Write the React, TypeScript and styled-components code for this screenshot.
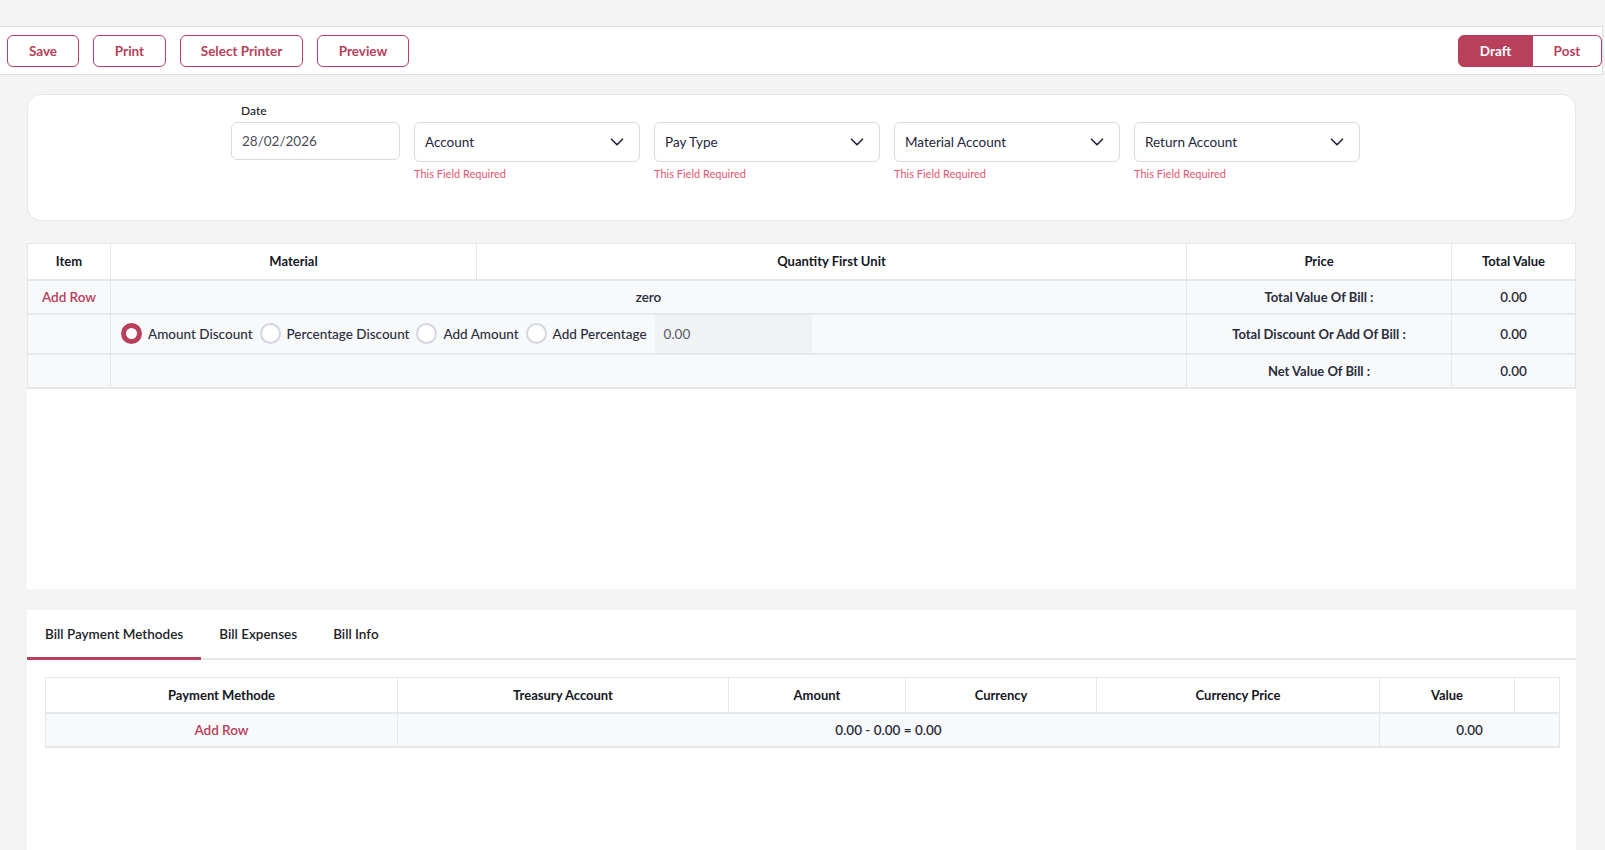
import React from "react";
import styled, { createGlobalStyle, css } from "styled-components";
import { ChevronDown } from "lucide-react";

const RED = "#b8405a";
const ERROR_RED = "#e5566f";
const BORDER = "#e5e7eb";
const TEXT = "#1f2230";

const GlobalStyle = createGlobalStyle`
  * { box-sizing: border-box; }
  body {
    margin: 0;
    background: #f4f4f5;
    font-family: Lato, "Noto Sans", sans-serif;
    color: ${TEXT};
  }
`;

const Page = styled.div`
  height: 850px;
  padding-top: 26px;
  display: flex;
  flex-direction: column;
  overflow: hidden;
`;

const Toolbar = styled.div`
  height: 49px;
  margin-right: 2px;
  background: #fff;
  border: 1px solid #dcdbe8;
  border-left: none;
  display: flex;
  align-items: center;
  justify-content: space-between;
  padding: 0 0 0 7px;
`;

const ButtonGroup = styled.div`
  display: flex;
  gap: 14px;
`;

const OutlineButton = styled.button<{ $w: number }>`
  height: 32px;
  width: ${(p) => p.$w}px;
  border: 1px solid ${RED};
  border-radius: 6px;
  background: #fff;
  color: ${RED};
  font-family: inherit;
  font-size: 13.5px;
  font-weight: 700;
  cursor: pointer;
`;

const Segmented = styled.div`
  display: flex;
`;

const SegButton = styled.button<{ $active?: boolean; $w: number }>`
  height: 32px;
  width: ${(p) => p.$w}px;
  font-family: inherit;
  font-size: 13.5px;
  font-weight: 700;
  border: 1px solid ${RED};
  cursor: pointer;
  ${(p) =>
    p.$active
      ? css`
          background: ${RED};
          color: #fff;
          border-radius: 6px 0 0 6px;
        `
      : css`
          background: #fff;
          color: ${RED};
          border-left: none;
          border-radius: 0 6px 6px 0;
        `}
`;

const Content = styled.div`
  flex: 1;
  display: flex;
  flex-direction: column;
  padding: 19px 29px 0 27px;
  min-height: 0;
`;

const FilterCard = styled.div`
  height: 127px;
  background: #fff;
  border: 1px solid ${BORDER};
  border-radius: 14px;
  display: flex;
  justify-content: center;
  gap: 14px;
  padding: 8px 12px 0 0;
`;

const Field = styled.div<{ $w: number }>`
  width: ${(p) => p.$w}px;
  display: flex;
  flex-direction: column;
`;

const Label = styled.label`
  font-size: 12px;
  font-weight: 500;
  color: #222;
  height: 17px;
  padding-left: 10px;
`;

const DateInput = styled.div`
  height: 38px;
  border: 1px solid #d8dae2;
  border-radius: 6px;
  display: flex;
  align-items: center;
  padding: 0 10px;
  font-size: 13.5px;
  color: #4a4d57;
  margin-top: 2px;
`;

const SelectBox = styled.div`
  height: 40px;
  margin-top: 19px;
  border: 1px solid #d8dae2;
  border-radius: 6px;
  display: flex;
  align-items: center;
  justify-content: space-between;
  padding: 0 11px 0 10px;
  font-size: 13.5px;
  color: #23263a;
`;

const ErrorText = styled.span`
  margin-top: 5px;
  font-size: 11px;
  color: ${ERROR_RED};
`;

const TableCard = styled.div`
  margin-top: 22px;
  height: 346px;
  background: #fff;
`;

const Table = styled.table`
  width: 100%;
  border-collapse: collapse;
  table-layout: fixed;
`;

const Th = styled.th<{ $h?: number }>`
  height: ${(p) => p.$h ?? 36}px;
  background: #fff;
  border: 1px solid ${BORDER};
  border-bottom: 2px solid ${BORDER};
  font-size: 13px;
  font-weight: 700;
  color: #15171f;
  text-align: center;
  padding: 0;
`;

const Td = styled.td<{ $h?: number; $bold?: boolean; $link?: boolean }>`
  height: ${(p) => p.$h ?? 34}px;
  background: #f8f9fb;
  border: 1px solid ${BORDER};
  border-bottom: 2px solid ${BORDER};
  font-size: ${(p) => (p.$bold ? 13 : 13.5)}px;
  font-weight: ${(p) => (p.$bold ? 700 : 600)};
  color: ${(p) => (p.$link ? RED : "#2a2d3a")};
  text-align: center;
  padding: 0;
`;

const RadioCell = styled.td`
  height: 40px;
  background: #f8f9fb;
  border: 1px solid ${BORDER};
  border-bottom: 2px solid ${BORDER};
  padding: 0;
`;

const RadioRow = styled.div`
  display: flex;
  align-items: center;
  height: 38px;
  padding-left: 10px;
  gap: 7px;
`;

const RadioOption = styled.label`
  display: flex;
  align-items: center;
  gap: 6px;
  font-size: 13.5px;
  font-weight: 500;
  color: #2a2d3a;
`;

const RadioDot = styled.span<{ $checked?: boolean }>`
  width: 21px;
  height: 21px;
  border-radius: 50%;
  background: #fff;
  border: ${(p) => (p.$checked ? `5px solid ${RED}` : "2px solid #d4d6dd")};
`;

const AmountInput = styled.div`
  width: 157px;
  height: 38px;
  margin-left: 1px;
  background: #f1f2f4;
  display: flex;
  align-items: center;
  padding-left: 9px;
  font-size: 13.5px;
  color: #555a66;
`;

const TabsCard = styled.div`
  margin-top: 21px;
  flex: 1;
  background: #fff;
`;

const TabList = styled.div`
  display: flex;
  border-bottom: 2px solid ${BORDER};
  height: 50px;
`;

const Tab = styled.div<{ $active?: boolean }>`
  padding: 0 18px;
  display: flex;
  align-items: center;
  font-size: 13.5px;
  font-weight: 600;
  color: #1c1e28;
  margin-bottom: -2px;
  border-bottom: 3px solid ${(p) => (p.$active ? RED : "transparent")};
`;

const PaymentWrap = styled.div`
  padding: 17px 17px 0 18px;
`;

const materialCols = [83, 366, 710, 265, 124];
const paymentCols = [352, 331, 177, 191, 283, 135, 45];

const toolbarButtons: [string, number][] = [
  ["Save", 72],
  ["Print", 73],
  ["Select Printer", 123],
  ["Preview", 92],
];

const selects = ["Account", "Pay Type", "Material Account", "Return Account"];
const radios = ["Amount Discount", "Percentage Discount", "Add Amount", "Add Percentage"];
const paymentHeads = ["Payment Methode", "Treasury Account", "Amount", "Currency", "Currency Price", "Value", ""];

export default function App() {
  return (
    <>
      <GlobalStyle />
      <Page>
        <Toolbar>
          <ButtonGroup>
            {toolbarButtons.map(([label, w]) => (
              <OutlineButton key={label} $w={w}>
                {label}
              </OutlineButton>
            ))}
          </ButtonGroup>
          <Segmented>
            <SegButton $active $w={75}>
              Draft
            </SegButton>
            <SegButton $w={69}>Post</SegButton>
          </Segmented>
        </Toolbar>

        <Content>
          <FilterCard>
            <Field $w={169}>
              <Label>Date</Label>
              <DateInput>28/02/2026</DateInput>
            </Field>
            {selects.map((s) => (
              <Field key={s} $w={226}>
                <SelectBox>
                  {s}
                  <ChevronDown size={22} strokeWidth={1.8} color="#23263a" />
                </SelectBox>
                <ErrorText>This Field Required</ErrorText>
              </Field>
            ))}
          </FilterCard>

          <TableCard>
            <Table>
              <colgroup>
                {materialCols.map((w, i) => (
                  <col key={i} style={{ width: w }} />
                ))}
              </colgroup>
              <thead>
                <tr>
                  <Th>Item</Th>
                  <Th>Material</Th>
                  <Th>Quantity First Unit</Th>
                  <Th>Price</Th>
                  <Th>Total Value</Th>
                </tr>
              </thead>
              <tbody>
                <tr>
                  <Td $link>Add Row</Td>
                  <Td colSpan={2}>zero</Td>
                  <Td $bold>Total Value Of Bill :</Td>
                  <Td>0.00</Td>
                </tr>
                <tr>
                  <Td $h={40} />
                  <RadioCell colSpan={2}>
                    <RadioRow>
                      {radios.map((r, i) => (
                        <RadioOption key={r}>
                          <RadioDot $checked={i === 0} />
                          {r}
                        </RadioOption>
                      ))}
                      <AmountInput>0.00</AmountInput>
                    </RadioRow>
                  </RadioCell>
                  <Td $h={40} $bold>
                    Total Discount Or Add Of Bill :
                  </Td>
                  <Td $h={40}>0.00</Td>
                </tr>
                <tr>
                  <Td />
                  <Td colSpan={2} />
                  <Td $bold>Net Value Of Bill :</Td>
                  <Td>0.00</Td>
                </tr>
              </tbody>
            </Table>
          </TableCard>

          <TabsCard>
            <TabList>
              <Tab $active>Bill Payment Methodes</Tab>
              <Tab>Bill Expenses</Tab>
              <Tab>Bill Info</Tab>
            </TabList>
            <PaymentWrap>
              <Table>
                <colgroup>
                  {paymentCols.map((w, i) => (
                    <col key={i} style={{ width: w }} />
                  ))}
                </colgroup>
                <thead>
                  <tr>
                    {paymentHeads.map((h, i) => (
                      <Th key={i} $h={35}>
                        {h}
                      </Th>
                    ))}
                  </tr>
                </thead>
                <tbody>
                  <tr>
                    <Td $link>Add Row</Td>
                    <Td colSpan={4}>0.00 - 0.00 = 0.00</Td>
                    <Td colSpan={2}>0.00</Td>
                  </tr>
                </tbody>
              </Table>
            </PaymentWrap>
          </TabsCard>
        </Content>
      </Page>
    </>
  );
}
